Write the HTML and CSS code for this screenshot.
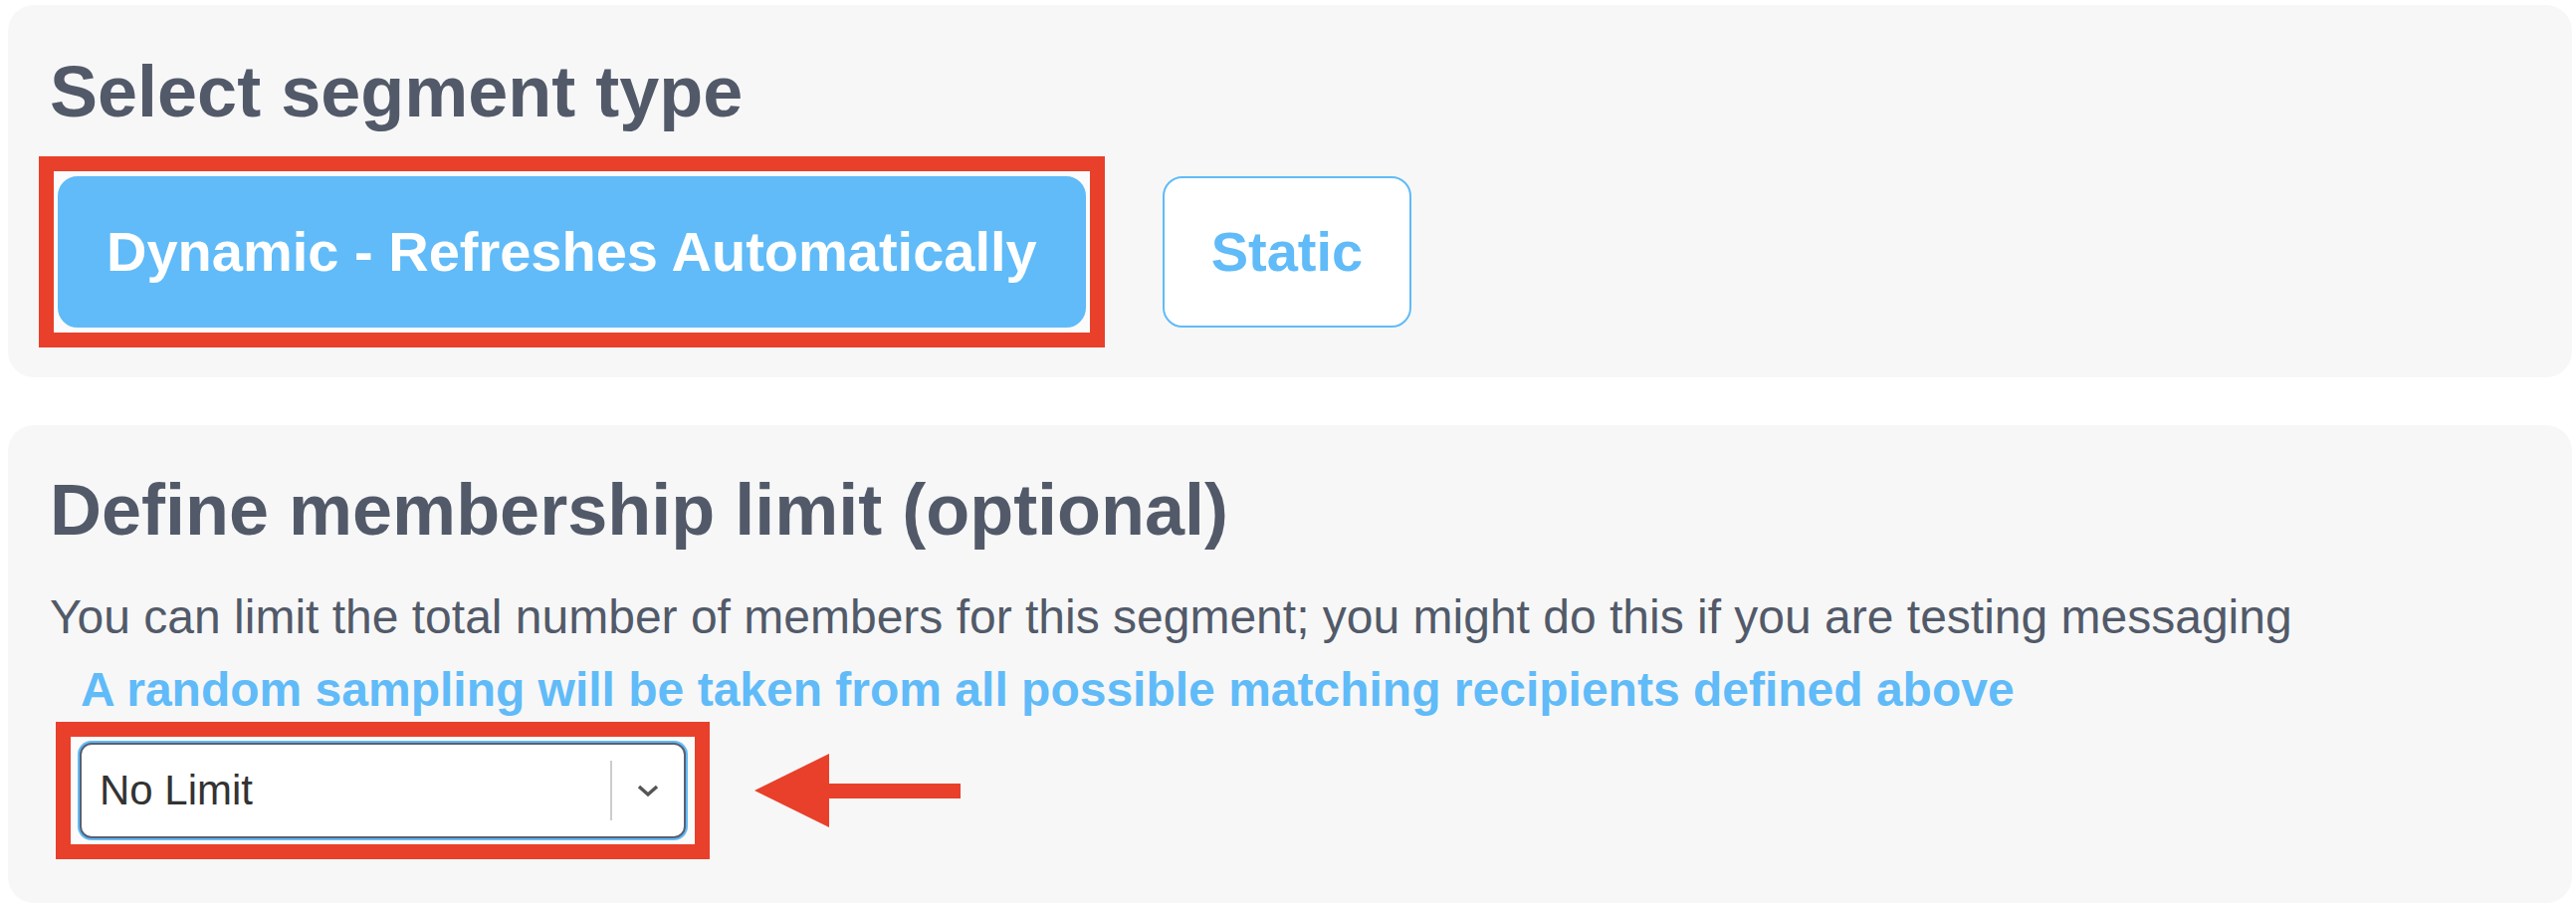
FILE: index.html
```html
<!DOCTYPE html>
<html>
<head>
  <title>Segment settings</title>
  <link rel="stylesheet" href="styles.css">
</head>
<body>
  <div class="page">
    <section class="card type-card">
      <h2>Select segment type</h2>
      <div class="type-row">
        <div class="callout callout-btn">
          <button class="btnType btnActive">Dynamic - Refreshes Automatically</button>
        </div>
        <button class="btnType">Static</button>
      </div>
    </section>

    <section class="card limit-card">
      <h2>Define membership limit (optional)</h2>
      <p class="hint">You can limit the total number of members for this segment; you might do this if you are testing messaging</p>
      <p class="note">A random sampling will be taken from all possible matching recipients defined above</p>

      <div class="limit-row">
        <div class="callout callout-select">
          <div class="select-control">
            <span class="select-value">No Limit</span>
            <span class="select-separator"></span>
            <span class="select-indicator">
              <svg width="24" height="14" viewBox="0 0 24 14">
                <path d="M3 3 L12 11 L21 3" fill="none" stroke="#555" stroke-width="3.5" />
              </svg>
            </span>
          </div>
        </div>

        <svg class="pointer" width="207" height="74" viewBox="0 0 207 74">
          <polygon points="0,37 75,0 75,74" fill="#e8402a" />
          <rect x="74" y="30" width="133" height="15" fill="#e8402a" />
        </svg>
      </div>
    </section>
  </div>
</body>
</html>
```

FILE: styles.css
```css
body {
  margin: 0;
  background-color: #fff;
  font-family: "Liberation Sans", Arial, sans-serif;
  color: #525a69;
}

.page {
  padding: 5px 4px 5px 8px;
}

.card {
  background-color: #f7f7f7;
  border-radius: 26px;
  padding: 46px 42px 50px;
}

.card h2 {
  margin: 0;
  font-size: 72px;
  line-height: 1.15;
  font-weight: bold;
}

.limit-card {
  margin-top: 48px;
  padding-top: 44px;
  padding-bottom: 65px;
}

/* red annotation frame, does not take space in the layout */
.callout {
  display: flex;
  border: 15px solid #e8402a;
  background-color: #fbfbfb;
}

.callout-btn {
  padding: 5px 4px;
  margin: -20px -19px;
}

.callout-select {
  padding: 6px 9px;
  margin: -21px -24px;
}

.type-row {
  display: flex;
  align-items: center;
  gap: 77px;
  margin-top: 43px;
  padding-left: 8px;
}

.btnType {
  font-family: inherit;
  font-size: 56px;
  line-height: 1.15;
  font-weight: bold;
  height: 152px;
  padding: 0 47px;
  border: 2px solid #60bbf8;
  border-radius: 20px;
  background-color: #fff;
  color: #60bbf8;
  cursor: pointer;
}

.btnActive {
  background-color: #60bbf8;
  color: #fff;
}

.hint {
  margin: 38px 0 0;
  font-size: 48px;
  line-height: 1.15;
}

.note {
  margin: 18px 0 0;
  padding-left: 31px;
  font-size: 48px;
  line-height: 1.15;
  font-weight: bold;
  color: #60bbf8;
}

.limit-row {
  display: flex;
  align-items: center;
  gap: 69px;
  margin-top: 26px;
  padding-left: 30px;
}

.select-control {
  display: flex;
  align-items: center;
  box-sizing: border-box;
  width: 609px;
  height: 96px;
  padding-left: 18px;
  background-color: #fff;
  border: 2px solid #596070;
  border-radius: 12px;
  box-shadow: 0 0 0 2px #60bbf8;
}

.select-value {
  flex: 1;
  font-size: 42px;
  color: #333;
}

.select-separator {
  width: 2px;
  height: 60px;
  background-color: #ccc;
}

.select-indicator {
  display: flex;
  align-items: center;
  justify-content: center;
  width: 72px;
}
```
